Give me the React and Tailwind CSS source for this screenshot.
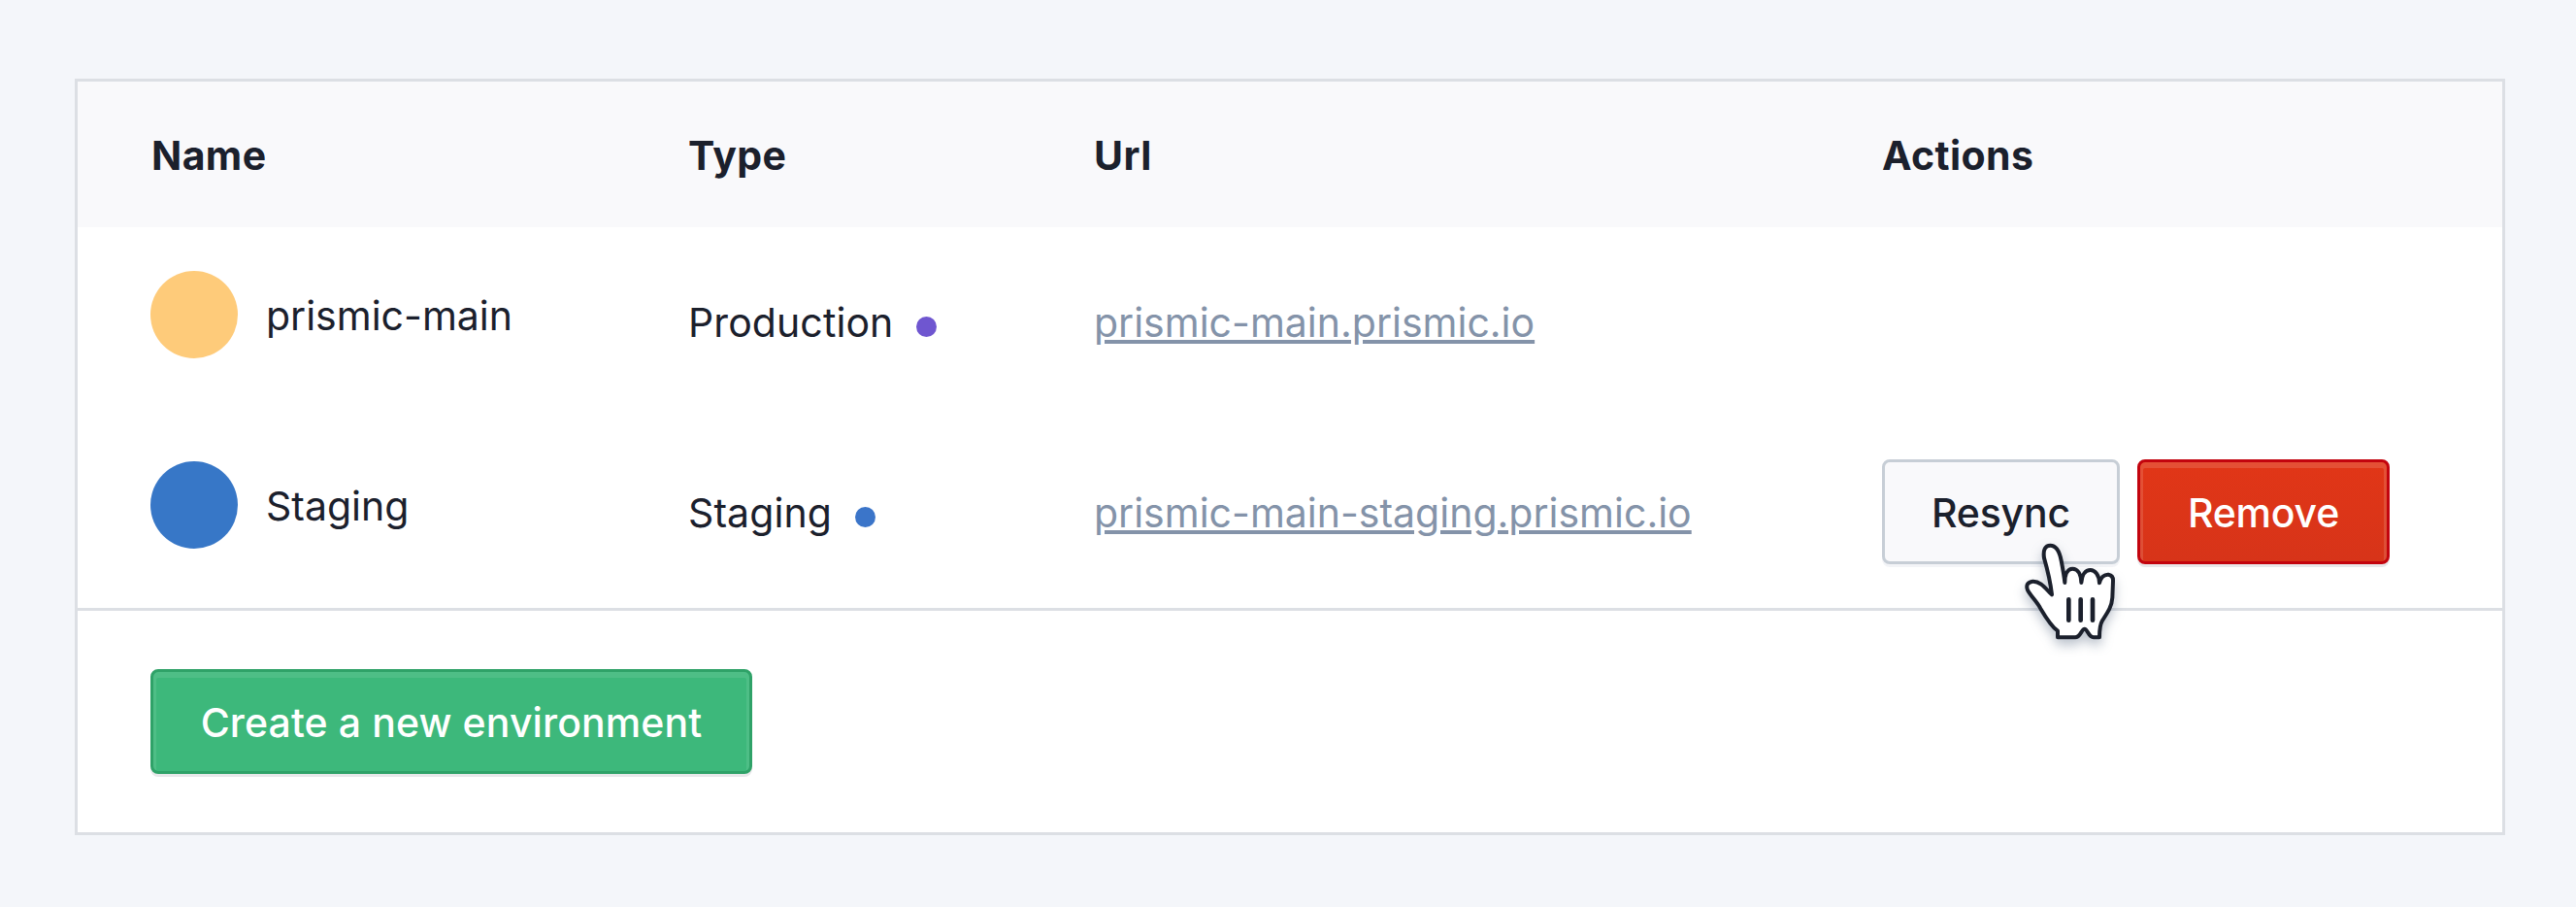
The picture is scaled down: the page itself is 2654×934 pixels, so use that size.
const COLUMNS = "grid grid-cols-[554px_418px_812px_1fr] pl-[75px]";

function Cursor() {
  return (
    <svg
      className="pointer-events-none absolute top-[67px] left-[121px] h-[130px] w-[140px] overflow-visible drop-shadow-[0_6px_6px_rgba(60,80,110,0.35)]"
      viewBox="0 0 420 390"
      fill="none"
      stroke="#1b202c"
      strokeWidth="12"
      strokeLinejoin="round"
      strokeLinecap="round"
    >
      <path
        fill="#fff"
        d="M162 217C158 182 149 142 138 104C134 78 142 65 157 65C176 65 186 85 191 112C196 138 200 160 202 180C202 155 210 137 226 137C242 137 252 154 253 180C255 155 266 141 281 141C296 141 308 157 309 181C313 164 324 154 337 155C348 157 352 164 351 176L349 226C347 255 334 272 318 297C309 312 309 330 309 349H291C275 349 272 323 263 323C254 323 250 349 234 349H180V329C160 315 143 287 127 260C114 236 96 221 87 203C81 187 88 178 103 176C128 175 144 200 162 217Z"
      />
      <path strokeWidth="14" d="M214 232V296M251 232V296M288 232V296" />
    </svg>
  );
}

function Row({ name, avatar, type, dot, url, children }) {
  return (
    <div className={`${COLUMNS} h-[196px] items-center`}>
      <div className="flex items-center gap-[29px] pb-4">
        <span className={`size-[90px] rounded-full ${avatar}`} />
        <span className="pt-0.5">{name}</span>
      </div>
      <div className="flex items-center">
        <span className="tracking-[0.1px]">{type}</span>
        <span className={`mt-[9px] ml-[24px] size-[21px] rounded-full ${dot}`} />
      </div>
      <div>
        <a className="text-[#8493a9] underline decoration-4 underline-offset-[3px]">{url}</a>
      </div>
      <div className="flex gap-[18px]">{children}</div>
    </div>
  );
}

const BUTTON =
  "flex h-[108px] shrink-0 items-center justify-center rounded-[8px] border-[3px] pt-[2px] font-medium whitespace-nowrap";

export default function App() {
  return (
    <div className="h-[934px] w-[2654px] bg-[#f4f6fa] pt-[81px] pl-[77px] font-['Inter',sans-serif] text-[41px] leading-[52px] text-[#1b202c]">
      <div className="h-[779px] w-[2504px] border-[3px] border-[#dcdfe4] bg-white">
        <div className={`${COLUMNS} h-[150px] items-center bg-[#f9f9fb] pt-0.5 font-bold tracking-[0.4px]`}>
          <span className="pl-px">Name</span>
          <span>Type</span>
          <span>Url</span>
          <span>Actions</span>
        </div>
        <Row
          name="prismic-main"
          avatar="bg-[#fecb7a]"
          type="Production"
          dot="bg-[#6f56d0]"
          url="prismic-main.prismic.io"
        />
        <Row
          name="Staging"
          avatar="bg-[#3777c7]"
          type="Staging"
          dot="bg-[#3b75c9]"
          url="prismic-main-staging.prismic.io"
        >
          <div className="relative mb-[2px]">
            <button
              className={`${BUTTON} w-[245px] border-[#c7ced6] bg-[#f9f9fb] tracking-[-0.2px] shadow-[0_3px_0_#f3f4f7]`}
            >
              Resync
            </button>
            <Cursor />
          </div>
          <button
            className={`${BUTTON} w-[260px] border-[#c3040e] bg-linear-to-b from-[#e13617] to-[#d73419] tracking-[-0.2px] text-white shadow-[0_3px_0_#e8e8ea,inset_0_3px_0_3px_rgba(255,255,255,0.13)]`}
          >
            Remove
          </button>
        </Row>
        <div className="h-[231px] border-t-[3px] border-[#dcdfe4] pt-[60px] pl-[75px]">
          <button
            className={`${BUTTON} w-[620px] border-[#2fa268] bg-[#3db87b] tracking-[0.1px] text-white shadow-[0_3px_0_#e8e8ea,inset_0_3px_0_3px_rgba(255,255,255,0.09)]`}
          >
            Create a new environment
          </button>
        </div>
      </div>
    </div>
  );
}
